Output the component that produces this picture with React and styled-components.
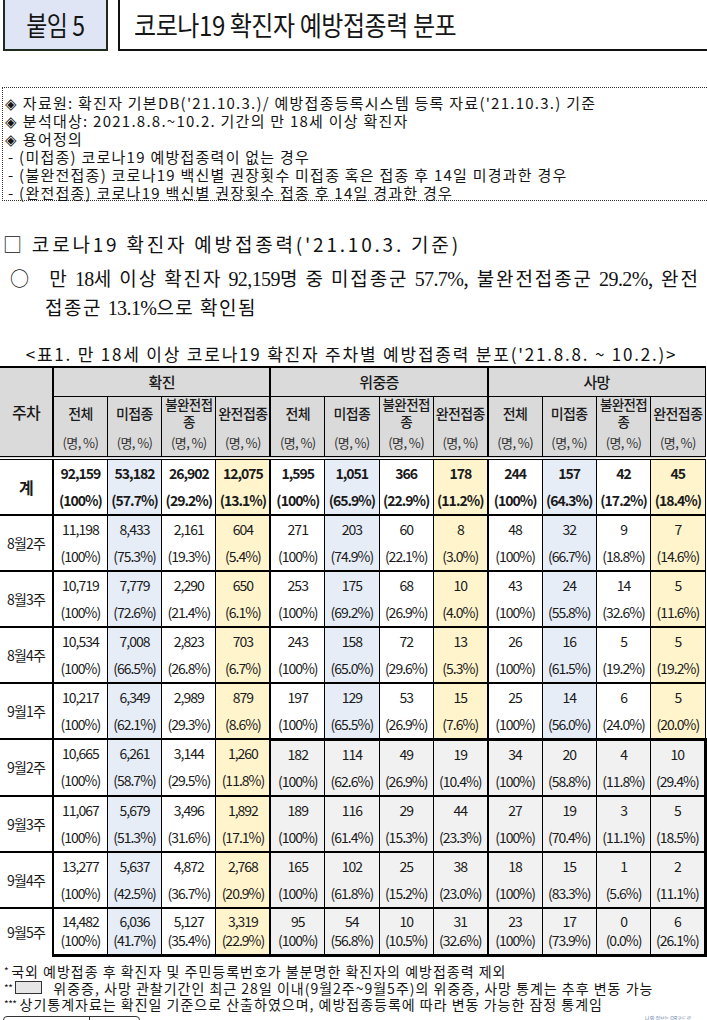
import React from 'react';
import styled, { createGlobalStyle } from 'styled-components';

const GlobalStyle = createGlobalStyle`
  html, body {
    margin: 0;
    padding: 0;
    background: #ffffff;
  }
  body {
    font-family: "Noto Sans CJK KR", "Noto Sans", sans-serif;
    color: #111111;
  }
`;

const Page = styled.div`
  width: 707px;
  height: 1020px;
  overflow: hidden;
`;

const TitleBar = styled.div`
  display: flex;
  gap: 10px;
  height: 51px;
  padding-left: 3px;
`;

const AttachBadge = styled.div`
  width: 105px;
  box-sizing: border-box;
  border: 2px solid #1d2b1d;
  border-top: none;
  background: #dfe5f4;
  display: flex;
  align-items: center;
  justify-content: center;
  overflow: hidden;
`;

const TitleBox = styled.div`
  flex: 1;
  box-sizing: border-box;
  border: 2px solid #111111;
  border-top: none;
  border-right: none;
  display: flex;
  align-items: center;
  padding-left: 14px;
  overflow: hidden;
`;

const Condensed = styled.span`
  display: inline-block;
  white-space: nowrap;
  font-size: ${(p) => p.size || 24}px;
  transform: scaleX(${(p) => p.scale || 0.7});
  transform-origin: ${(p) => p.origin || 'left center'};
  color: #151515;
  letter-spacing: -0.5px;
`;

const NoteBox = styled.div`
  margin-top: 36px;
  margin-left: 2px;
  height: 114px;
  box-sizing: border-box;
  border: 1px dotted #333333;
  border-right: none;
  padding: 6px 0 0 2px;
  font-size: 15px;
  line-height: 18px;
  letter-spacing: 1.25px;
  color: #151515;
`;

const NoteLine = styled.div`
  white-space: nowrap;
  padding-left: ${(p) => (p.dash ? '3px' : '0')};
`;

const SectionTitle = styled.div`
  margin-top: 31px;
  padding-left: 3px;
  font-size: 19px;
  line-height: 24px;
  letter-spacing: 2.8px;
  white-space: nowrap;
  color: #111111;
`;

const Bullet = styled.div`
  margin-top: ${(p) => p.gap ?? 8}px;
  font-size: 19px;
  line-height: 28px;
  letter-spacing: ${(p) => p.spacing ?? 1.9}px;
  white-space: nowrap;
  overflow: hidden;
  color: #111111;
  padding-left: ${(p) => p.indent || 10}px;
`;

const Num = styled.span`
  font-family: "Liberation Serif", serif;
  font-size: 20px;
  letter-spacing: -0.6px;
`;

const Caption = styled.div`
  margin-top: 21px;
  text-align: center;
  font-size: 17px;
  line-height: 22px;
  letter-spacing: 1.8px;
  white-space: nowrap;
  padding-right: 4px;
  color: #111111;
`;

const Table = styled.table`
  width: 705px;
  border-collapse: collapse;
  table-layout: fixed;
  margin-top: 1px;
  border-top: 2px solid #000000;
  border-right: 1px solid #000000;
  font-size: 14px;
  color: #1a1a1a;
`;

const HeadCell = styled.th`
  background: #dadada;
  font-weight: 500;
  font-size: ${(p) => p.size || 14}px;
  padding: 0;
  text-align: center;
  vertical-align: middle;
  border-left: ${(p) => (p.thick ? 2 : 1)}px solid #000000;
  border-bottom: ${(p) => (p.last ? '4px double #000000' : '1px solid #000000')};
  letter-spacing: -0.6px;
  color: #1a1a1a;
`;

const HeadLabel = styled.div`
  height: 32px;
  display: flex;
  flex-direction: column;
  align-items: center;
  justify-content: center;
  font-size: 14px;
  line-height: 16px;
`;

const HeadLabelLine = styled.span`
  display: block;
  height: 17px;
  line-height: 17px;
  font-size: 13.5px;
`;

const HeadUnit = styled.div`
  height: 27px;
  line-height: 27px;
  font-weight: 400;
  font-size: 13px;
  color: #333333;
`;

const WeekCell = styled.td`
  padding: 0;
  text-align: center;
  vertical-align: middle;
  border-top: 2px solid #000000;
  font-size: ${(p) => (p.total ? 16 : 14)}px;
  font-weight: ${(p) => (p.total ? 700 : 400)};
  letter-spacing: -0.8px;
  white-space: nowrap;
`;

const toneColor = {
  white: '#ffffff',
  blue: '#e6edf7',
  yellow: '#fff4cc',
  grey: '#f1f1f1',
};

const ValueCell = styled.td`
  padding: 0;
  text-align: center;
  vertical-align: middle;
  background: ${(p) => toneColor[p.tone]};
  border-top: ${(p) => (p.blockTop ? 3 : 2)}px solid #000000;
  border-left: ${(p) => (p.thick ? 2 : 1)}px solid #000000;
  border-right: ${(p) => (p.blockRight ? '3px solid #000000' : 'none')};
  border-bottom: ${(p) => (p.blockBottom ? '3px solid #000000' : 'none')};
  font-weight: ${(p) => (p.total ? 700 : 400)};
  letter-spacing: -1px;
  white-space: nowrap;
`;

const ValueLine = styled.div`
  line-height: ${(p) => (p.tight ? 19 : 27)}px;
`;

const BodyRow = styled.tr`
  height: ${(p) => p.h}px;
`;

const Footnotes = styled.div`
  margin-top: 6px;
  padding-left: 4px;
  font-size: 14px;
  line-height: 16.5px;
  letter-spacing: 1px;
  color: #151515;
`;

const FootLine = styled.div`
  display: flex;
  align-items: center;
  white-space: nowrap;
`;

const Stars = styled.span`
  font-size: 10px;
  letter-spacing: -0.5px;
  margin-right: 3px;
`;

const Swatch = styled.span`
  display: inline-block;
  width: 25px;
  height: 11px;
  border: 1px solid #333333;
  background: #e6e6e6;
  margin-right: 11px;
`;

const BottomStrip = styled.div`
  display: flex;
  justify-content: space-between;
  align-items: flex-start;
  margin-top: 3px;
  padding: 0 16px 0 3px;
`;

const SplitBox = styled.div`
  display: flex;
  width: 137px;
  height: 20px;
  border: 1px solid #333333;
  border-radius: 4px;
  box-sizing: border-box;
`;

const SplitPart = styled.div`
  width: ${(p) => p.w}px;
  border-right: ${(p) => (p.divide ? '1px solid #333333' : 'none')};
`;

const TinyText = styled.span`
  font-size: 5px;
  line-height: 6px;
  margin-top: -1px;
  color: #6a7fa8;
  letter-spacing: 0;
`;

const groups = ['확진', '위중증', '사망'];
const subs = ['전체', '미접종', '불완전접종', '완전접종'];

const rows = [
  ['계', ['92,159', '100%'], ['53,182', '57.7%'], ['26,902', '29.2%'], ['12,075', '13.1%'], ['1,595', '100%'], ['1,051', '65.9%'], ['366', '22.9%'], ['178', '11.2%'], ['244', '100%'], ['157', '64.3%'], ['42', '17.2%'], ['45', '18.4%']],
  ['8월2주', ['11,198', '100%'], ['8,433', '75.3%'], ['2,161', '19.3%'], ['604', '5.4%'], ['271', '100%'], ['203', '74.9%'], ['60', '22.1%'], ['8', '3.0%'], ['48', '100%'], ['32', '66.7%'], ['9', '18.8%'], ['7', '14.6%']],
  ['8월3주', ['10,719', '100%'], ['7,779', '72.6%'], ['2,290', '21.4%'], ['650', '6.1%'], ['253', '100%'], ['175', '69.2%'], ['68', '26.9%'], ['10', '4.0%'], ['43', '100%'], ['24', '55.8%'], ['14', '32.6%'], ['5', '11.6%']],
  ['8월4주', ['10,534', '100%'], ['7,008', '66.5%'], ['2,823', '26.8%'], ['703', '6.7%'], ['243', '100%'], ['158', '65.0%'], ['72', '29.6%'], ['13', '5.3%'], ['26', '100%'], ['16', '61.5%'], ['5', '19.2%'], ['5', '19.2%']],
  ['9월1주', ['10,217', '100%'], ['6,349', '62.1%'], ['2,989', '29.3%'], ['879', '8.6%'], ['197', '100%'], ['129', '65.5%'], ['53', '26.9%'], ['15', '7.6%'], ['25', '100%'], ['14', '56.0%'], ['6', '24.0%'], ['5', '20.0%']],
  ['9월2주', ['10,665', '100%'], ['6,261', '58.7%'], ['3,144', '29.5%'], ['1,260', '11.8%'], ['182', '100%'], ['114', '62.6%'], ['49', '26.9%'], ['19', '10.4%'], ['34', '100%'], ['20', '58.8%'], ['4', '11.8%'], ['10', '29.4%']],
  ['9월3주', ['11,067', '100%'], ['5,679', '51.3%'], ['3,496', '31.6%'], ['1,892', '17.1%'], ['189', '100%'], ['116', '61.4%'], ['29', '15.3%'], ['44', '23.3%'], ['27', '100%'], ['19', '70.4%'], ['3', '11.1%'], ['5', '18.5%']],
  ['9월4주', ['13,277', '100%'], ['5,637', '42.5%'], ['4,872', '36.7%'], ['2,768', '20.9%'], ['165', '100%'], ['102', '61.8%'], ['25', '15.2%'], ['38', '23.0%'], ['18', '100%'], ['15', '83.3%'], ['1', '5.6%'], ['2', '11.1%']],
  ['9월5주', ['14,482', '100%'], ['6,036', '41.7%'], ['5,127', '35.4%'], ['3,319', '22.9%'], ['95', '100%'], ['54', '56.8%'], ['10', '10.5%'], ['31', '32.6%'], ['23', '100%'], ['17', '73.9%'], ['0', '0.0%'], ['6', '26.1%']],
];

// 9월2주부터는 위중증, 사망 관찰기간 미경과
const PENDING_FROM = 5;

const getTone = (rowIdx, colIdx) => {
  if (rowIdx >= PENDING_FROM && colIdx >= 4) return 'grey';
  if (colIdx % 4 === 1) return 'blue';
  if (colIdx % 4 === 3) return 'yellow';
  return 'white';
};

const renderLabel = (label) => {
  if (label === '불완전접종') {
    return (
      <>
        <HeadLabelLine>불완전접</HeadLabelLine>
        <HeadLabelLine>종</HeadLabelLine>
      </>
    );
  }
  return label;
};

const App = () => {
  const lastRow = rows.length - 1;
  return (
    <Page>
      <GlobalStyle />
      <TitleBar>
        <AttachBadge>
          <Condensed size={27} scale={0.85} origin="center">
            붙임 5
          </Condensed>
        </AttachBadge>
        <TitleBox>
          <Condensed size={27} scale={0.89}>
            코로나19 확진자 예방접종력 분포
          </Condensed>
        </TitleBox>
      </TitleBar>

      <NoteBox>
        <NoteLine>◈ 자료원: 확진자 기본DB('21.10.3.)/ 예방접종등록시스템 등록 자료('21.10.3.) 기준</NoteLine>
        <NoteLine>◈ 분석대상: 2021.8.8.~10.2. 기간의 만 18세 이상 확진자</NoteLine>
        <NoteLine>◈ 용어정의</NoteLine>
        <NoteLine dash>- (미접종) 코로나19 예방접종력이 없는 경우</NoteLine>
        <NoteLine dash>- (불완전접종) 코로나19 백신별 권장횟수 미접종 혹은 접종 후 14일 미경과한 경우</NoteLine>
        <NoteLine dash>- (완전접종) 코로나19 백신별 권장횟수 접종 후 14일 경과한 경우</NoteLine>
      </NoteBox>

      <SectionTitle>□ 코로나19 확진자 예방접종력('21.10.3. 기준)</SectionTitle>
      <Bullet>
        ○&nbsp;&nbsp;&nbsp;만 <Num>18</Num>세 이상 확진자 <Num>92,159</Num>명 중 미접종군 <Num>57.7%</Num>, 불완전접종군{' '}
        <Num>29.2%</Num>, 완전
      </Bullet>
      <Bullet indent={45} gap={0} spacing={1.5}>
        접종군 <Num>13.1%</Num>으로 확인됨
      </Bullet>

      <Caption>&lt;표1. 만 18세 이상 코로나19 확진자 주차별 예방접종력 분포('21.8.8. ~ 10.2.)&gt;</Caption>

      <Table>
        <colgroup>
          <col style={{ width: 53 }} />
          {Array.from({ length: 12 }).map((_, i) => (
            <col key={i} style={{ width: 54.33 }} />
          ))}
        </colgroup>
        <thead>
          <tr style={{ height: 29 }}>
            <HeadCell rowSpan={2} size={16} last style={{ borderLeft: 'none' }}>
              주차
            </HeadCell>
            {groups.map((g) => (
              <HeadCell key={g} colSpan={4} thick size={15}>
                {g}
              </HeadCell>
            ))}
          </tr>
          <tr style={{ height: 59 }}>
            {groups.map((g) =>
              subs.map((s, i) => (
                <HeadCell key={g + s} thick={i === 0} last>
                  <HeadLabel>{renderLabel(s)}</HeadLabel>
                  <HeadUnit>(명, %)</HeadUnit>
                </HeadCell>
              ))
            )}
          </tr>
        </thead>
        <tbody>
          {rows.map((row, r) => {
            const [label, ...cells] = row;
            const total = r === 0;
            const tight = r === lastRow;
            return (
              <BodyRow key={label} h={total ? 54 : tight ? 48 : 56}>
                <WeekCell total={total} style={total ? { borderTop: 'none' } : undefined}>
                  {label}
                </WeekCell>
                {cells.map(([n, pct], c) => (
                  <ValueCell
                    key={c}
                    tone={getTone(r, c)}
                    thick={c % 4 === 0}
                    total={total}
                    blockTop={r === PENDING_FROM && c >= 4}
                    blockRight={r >= PENDING_FROM && c === 11}
                    blockBottom={r === lastRow}
                    style={total ? { borderTop: 'none' } : undefined}
                  >
                    <ValueLine tight={tight}>{n}</ValueLine>
                    <ValueLine tight={tight}>({pct})</ValueLine>
                  </ValueCell>
                ))}
              </BodyRow>
            );
          })}
        </tbody>
      </Table>

      <Footnotes>
        <FootLine>
          <Stars>*</Stars>국외 예방접종 후 확진자 및 주민등록번호가 불분명한 확진자의 예방접종력 제외
        </FootLine>
        <FootLine>
          <Stars>**</Stars>
          <Swatch />
          위중증, 사망 관찰기간인 최근 28일 이내(9월2주~9월5주)의 위중증, 사망 통계는 추후 변동 가능
        </FootLine>
        <FootLine>
          <Stars>***</Stars>상기통계자료는 확진일 기준으로 산출하였으며, 예방접종등록에 따라 변동 가능한 잠정 통계임
        </FootLine>
      </Footnotes>

      <BottomStrip>
        <SplitBox>
          <SplitPart w={86} divide />
          <SplitPart w={50} />
        </SplitBox>
        <TinyText>나의 정보는 QR코드로</TinyText>
      </BottomStrip>
    </Page>
  );
};

export default App;
